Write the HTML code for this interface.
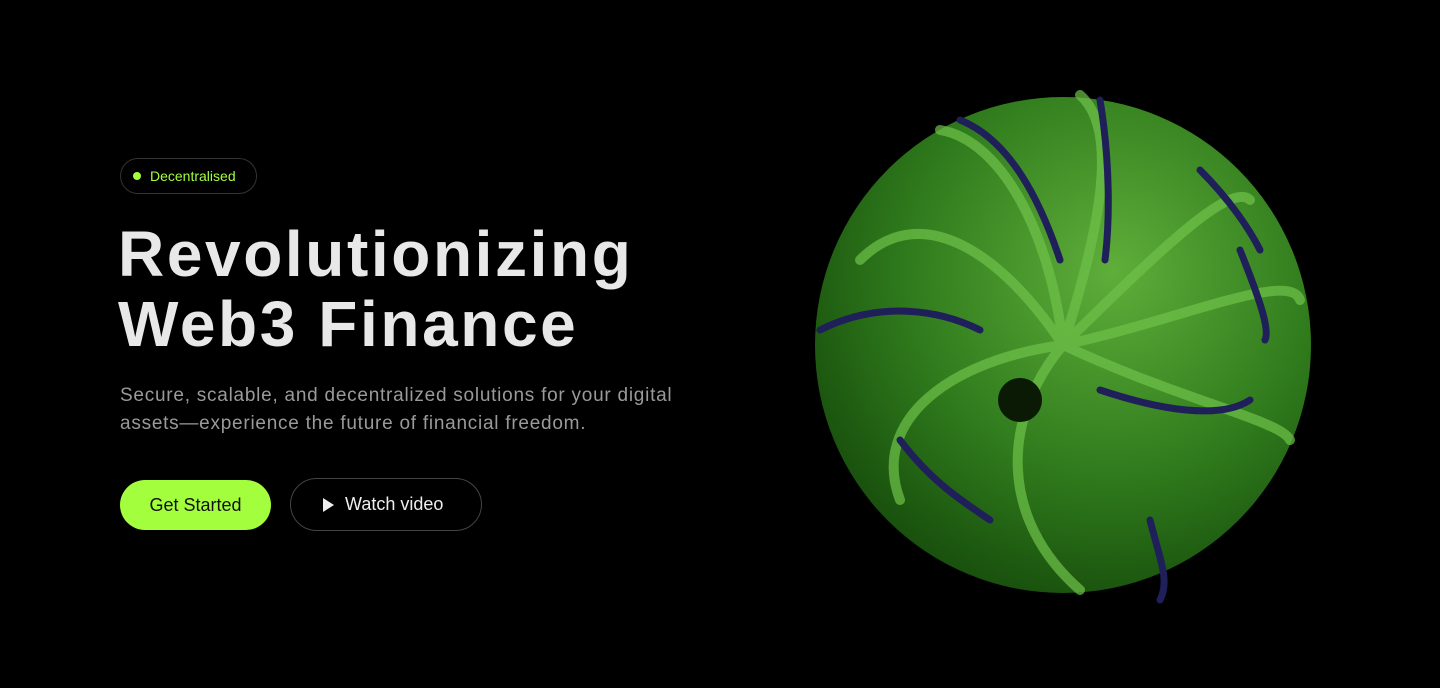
<!DOCTYPE html>
<html><head><style>
body{margin:0;width:1440px;height:688px;background:#000;overflow:hidden;font-family:"Liberation Sans",sans-serif;position:relative}
.badge{position:absolute;left:120px;top:158px;width:137px;height:36px;border:1px solid #333;border-radius:18px;box-sizing:border-box;color:#a3ff3d;font-size:14px;line-height:34px;padding-left:29px}
.badge:before{content:"";position:absolute;left:12px;top:13px;width:8px;height:8px;border-radius:50%;background:#a3ff3d}
h1{position:absolute;left:118px;top:219px;margin:0;color:#e8e8e8;font-size:64px;line-height:70px;font-weight:bold;letter-spacing:2.6px}
p{position:absolute;left:120px;top:382px;margin:0;color:#9a9a9a;font-size:19px;line-height:28px;width:650px;letter-spacing:0.75px}
.btn1{position:absolute;left:120px;top:480px;width:151px;height:50px;border-radius:25px;background:#a3ff3d;color:#111;font-size:18px;line-height:50px;text-align:center}
.btn2{position:absolute;left:290px;top:478px;width:192px;height:53px;border-radius:27px;border:1.5px solid #444;box-sizing:border-box;color:#eee;font-size:18px;line-height:50px;padding-left:54px}
.btn2:before{content:"";position:absolute;left:32px;top:19px;border-left:11px solid #eee;border-top:7px solid transparent;border-bottom:7px solid transparent}
</style></head><body>
<div class="badge">Decentralised</div>
<h1>Revolutionizing<br>Web3 Finance</h1>
<p>Secure, scalable, and decentralized solutions for your digital<br>assets—experience the future of financial freedom.</p>
<div class="btn1">Get Started</div>
<div class="btn2">Watch video</div>
<svg style="position:absolute;left:0;top:0" width="1440" height="688">
<defs><radialGradient id="g" cx="0.6" cy="0.35" r="0.7"><stop offset="0" stop-color="#5fae3a"/><stop offset="0.6" stop-color="#2f7a1c"/><stop offset="1" stop-color="#174d0c"/></radialGradient></defs>
<circle cx="1063" cy="345" r="248" fill="url(#g)"/>
<g fill="none" stroke-linecap="round">
<g stroke="#6fc24a" stroke-width="10" opacity="0.7">
<path d="M1063 345 C1000 250 920 200 860 260"/>
<path d="M1063 345 C1050 230 1000 140 940 130"/>
<path d="M1063 345 C1100 230 1120 130 1080 95"/>
<path d="M1063 345 C1150 260 1230 180 1250 200"/>
<path d="M1063 345 C1180 320 1290 270 1300 300"/>
<path d="M1063 345 C1180 400 1280 420 1290 440"/>
<path d="M1063 345 C950 360 870 420 900 500"/>
<path d="M1063 345 C1000 420 1000 520 1080 590"/>
</g>
<g stroke="#1f1f5a" stroke-width="7">
<path d="M960 120 C1010 140 1040 200 1060 260"/>
<path d="M1200 170 C1230 200 1250 230 1260 250"/>
<path d="M1240 250 C1260 300 1270 330 1265 340"/>
<path d="M820 330 C880 300 940 310 980 330"/>
<path d="M1100 390 C1160 410 1220 420 1250 400"/>
<path d="M1150 520 C1160 560 1170 580 1160 600"/>
<path d="M1100 100 C1110 160 1110 220 1105 260"/>
<path d="M900 440 C930 480 960 500 990 520"/>
</g>
</g>
<circle cx="1020" cy="400" r="22" fill="#0a1a05"/>
</svg>
</body></html>
